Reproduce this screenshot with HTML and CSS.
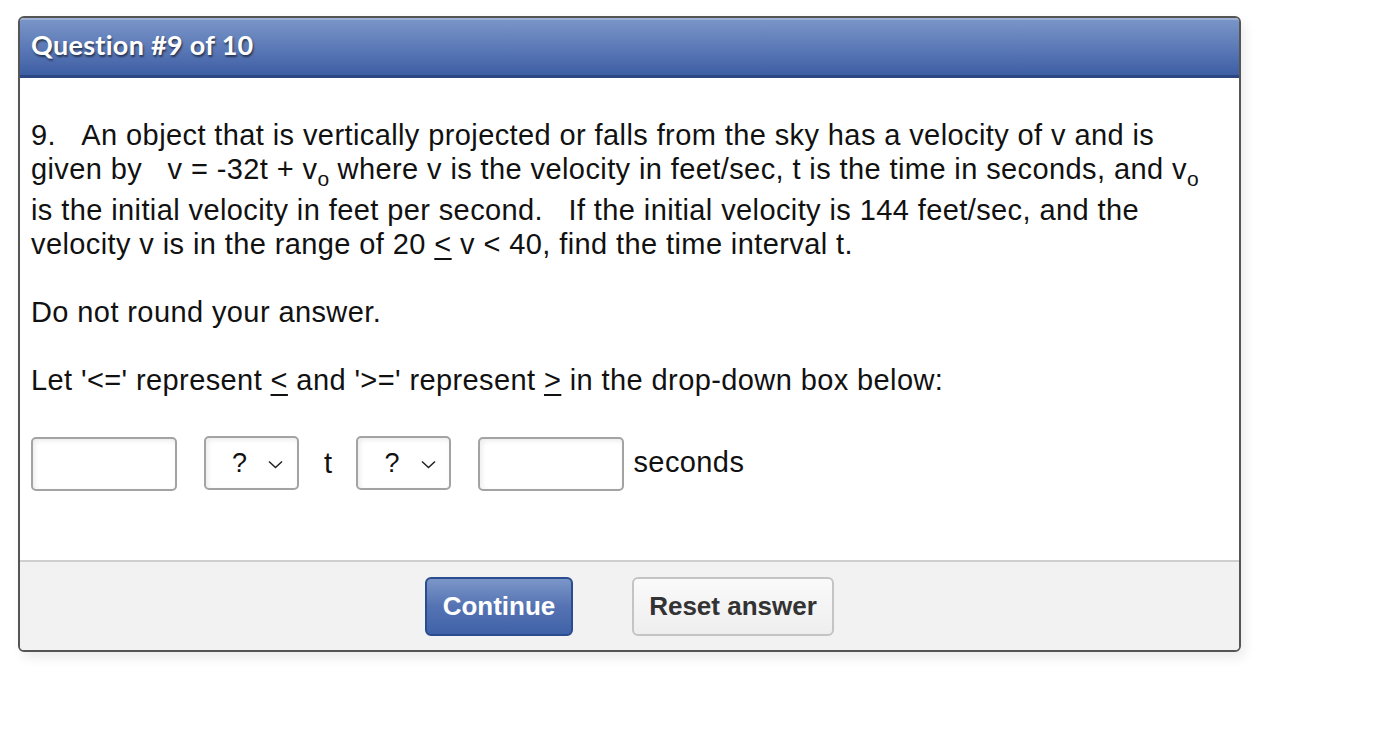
FILE: index.html
```html
<!DOCTYPE html>
<html>
<head>
<meta charset="utf-8">
<link rel="stylesheet" href="styles.css">
</head>
<body>
<div class="panel">
  <div class="header"><span class="title">Question #9 of 10</span></div>
  <div class="content">
    <p class="q">9.&nbsp;&nbsp;&nbsp;An object that is vertically projected or falls from the sky has a velocity of v and is given by&nbsp;&nbsp;&nbsp;v = -32t + v<sub>o</sub> where v is the velocity in feet/sec, t is the time in seconds, and v<sub>o</sub> is the initial velocity in feet per second.&nbsp;&nbsp;&nbsp;If the initial velocity is 144 feet/sec, and the velocity v is in the range of 20 <u>&lt;</u> v &lt; 40, find the time interval t.</p>
    <p class="p">Do not round your answer.</p>
    <p class="p">Let '&lt;=' represent <u>&lt;</u> and '&gt;=' represent <u>&gt;</u> in the drop-down box below:</p>
    <div class="answer">
      <div class="field"></div>
      <div class="select"><span>?</span><svg width="15" height="9" viewBox="0 0 15 9"><path d="M1 1.5 L7.5 7.5 L14 1.5" fill="none" stroke="#222" stroke-width="1.5"/></svg></div>
      <span class="t">t</span>
      <div class="select"><span>?</span><svg width="15" height="9" viewBox="0 0 15 9"><path d="M1 1.5 L7.5 7.5 L14 1.5" fill="none" stroke="#222" stroke-width="1.5"/></svg></div>
      <div class="field"></div>
      <span class="unit">seconds</span>
    </div>
  </div>
  <div class="footer">
    <button class="btn primary">Continue</button>
    <button class="btn secondary">Reset answer</button>
  </div>
</div>
</body>
</html>
```
FILE: styles.css
```css
html, body { margin: 0; padding: 0; background: #fff; }
body { padding: 16px 18px; font-family: "Liberation Sans", Arial, sans-serif; color: #111; }
.panel {
  width: 1219px;
  border: 2px solid #555;
  border-radius: 6px;
  box-shadow: 4px 6px 12px rgba(0,0,0,0.08);
  overflow: hidden;
  background: #fff;
}
.header {
  height: 57px;
  background: linear-gradient(#7b96c8, #5a78b6 55%, #3e5ea4);
  border-bottom: 3px solid #2c4583;
  display: flex;
  align-items: center;
  padding-left: 11px;
  box-shadow: inset 0 2px 0 rgba(255,255,255,0.25);
}
.title {
  font-family: "Lato", "Open Sans", sans-serif;
  font-weight: 700;
  font-size: 27px;
  letter-spacing: 0.3px;
  color: #fff;
  text-shadow: 1px 2px 2px rgba(0,0,0,0.55);
  margin-top: -4px;
}
.content {
  padding: 40px 30px 70px 11px;
  font-size: 29px;
  letter-spacing: 0.4px;
  line-height: 34px;
}
.content p { margin: 0 0 34px 0; }
.content .p:last-of-type { margin-bottom: 39px; }
sub { font-size: 21px; line-height: 29px; vertical-align: -7px; letter-spacing: 0; }
u { text-decoration-thickness: 1.5px; text-underline-offset: 4px; }
.answer { display: flex; align-items: center; height: 54px; }
.field {
  width: 146px; height: 54px;
  box-sizing: border-box;
  border: 2px solid #a3a3a3;
  border-radius: 5px;
  box-shadow: inset 2px 2px 5px rgba(0,0,0,0.08);
  background: #fff;
  margin-top: 2px;
}
.select {
  width: 95px; height: 54px;
  border: 2px solid #a3a3a3;
  border-radius: 5px;
  box-shadow: inset 2px 2px 5px rgba(0,0,0,0.08);
  display: flex; align-items: center;
  box-sizing: border-box;
  padding-left: 26px;
  gap: 21px;
  margin-left: 27px;
}
.select span { font-size: 27px; letter-spacing: 0; }
.select svg { margin-top: 2px; }
.t { margin: 0 24px 0 25px; }
.t + .select { margin-left: 0; }
.select + .field { margin-left: 27px; }
.unit { margin-left: 9px; margin-top: -3px; }
.footer {
  border-top: 2px solid #cfcfcf;
  background: #f2f2f2;
  height: 88px;
  display: flex;
  align-items: center;
  justify-content: center;
  gap: 59px;
}
.btn {
  height: 59px;
  border-radius: 6px;
  font-family: "Liberation Sans", Arial, sans-serif;
  font-weight: 700;
  font-size: 26px;
  cursor: pointer;
  padding: 0;
}
.primary {
  width: 148px;
  color: #fff;
  border: 2px solid #2b4c8e;
  background: linear-gradient(#7b96c8, #5573b3 50%, #3f62a8);
}
.secondary {
  width: 202px;
  color: #333;
  border: 2px solid #c4c4c4;
  background: linear-gradient(#fafafa, #eeeeee);
}
```
